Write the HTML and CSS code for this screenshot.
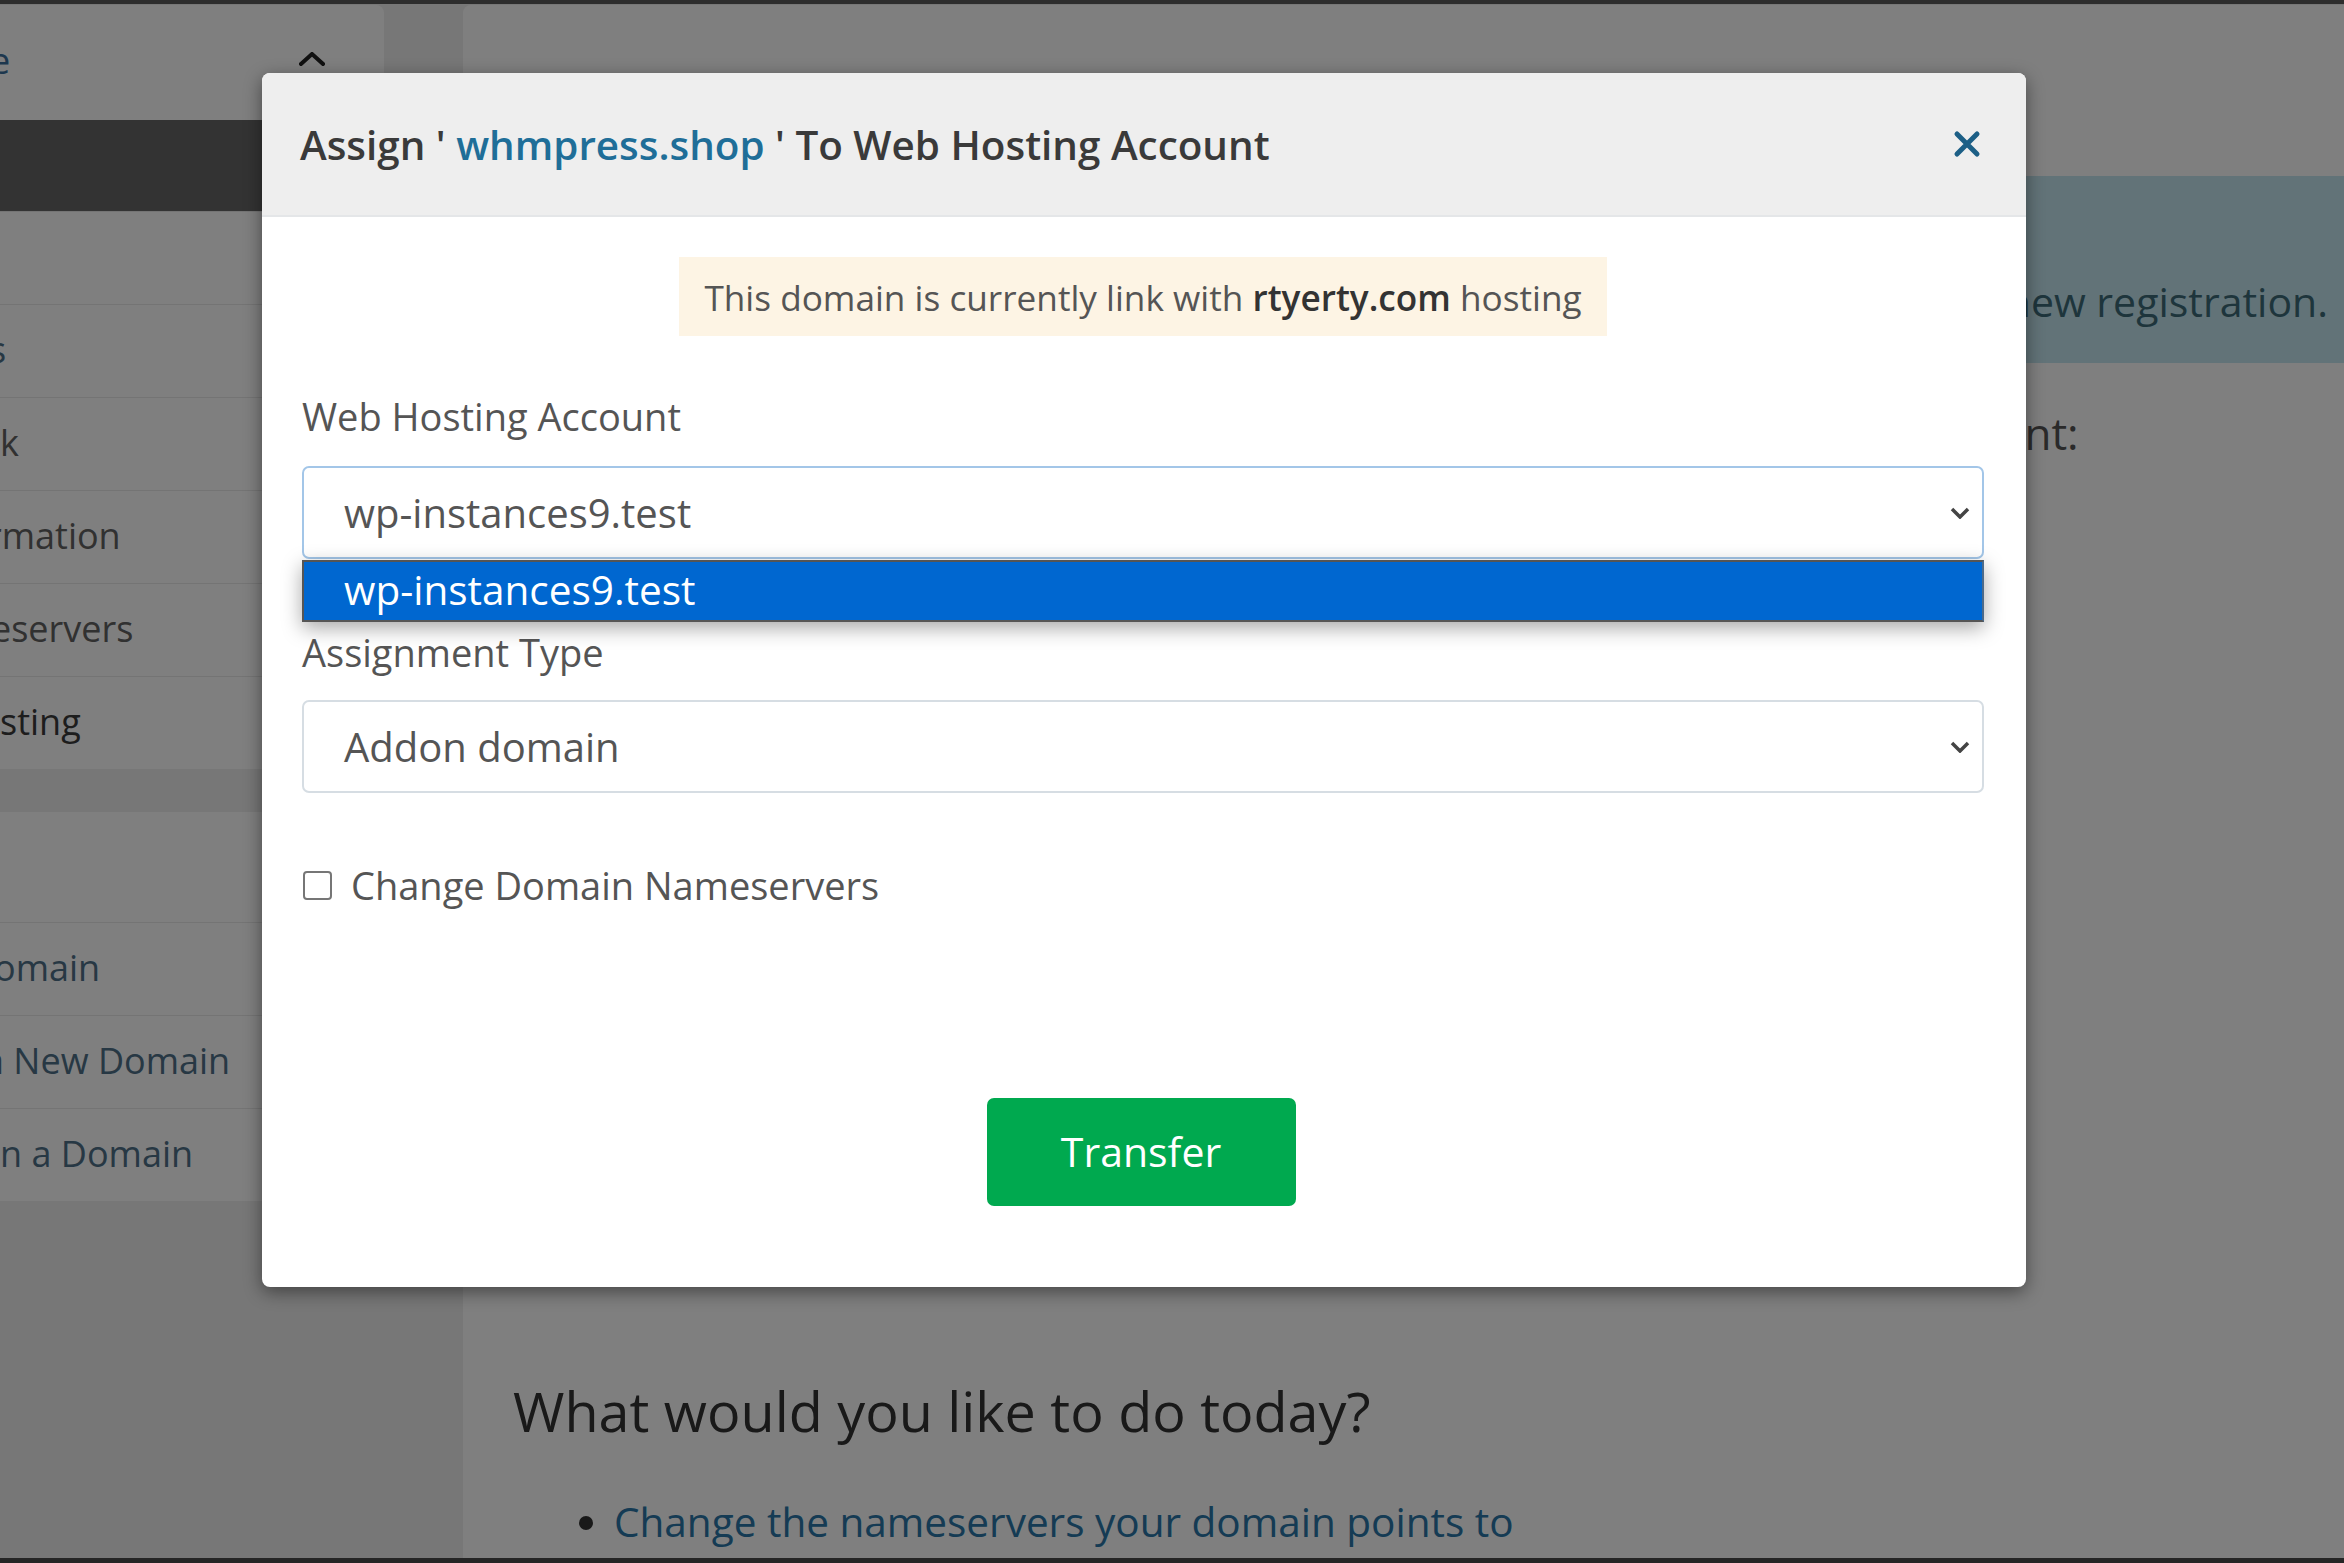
FILE: index.html
```html
<!DOCTYPE html>
<html lang="en">
<head>
<meta charset="utf-8">
<title>Assign to Web Hosting Account</title>
<link rel="stylesheet" href="styles.css">
</head>
<body>
<div class="topbar"></div>
<div class="page">
  <aside class="sidebar">
    <div class="panel">
      <div class="panel-head">
        <span class="panel-title cut">e</span>
        <svg class="chev-up" width="26" height="14" viewBox="0 0 26 14"><polyline points="2,12 13,2 24,12" fill="none" stroke="#222" stroke-width="4" stroke-linecap="square"/></svg>
      </div>
      <div class="item active"></div>
      <div class="item"></div>
      <div class="item linkish"><span class="cut-s">s</span></div>
      <div class="item">k</div>
      <div class="item"><span class="cut-m">rmation</span></div>
      <div class="item"><span class="cut-e">eservers</span></div>
      <div class="item strong">sting</div>
    </div>
    <div class="panel second">
      <div class="panel-head tall"></div>
      <div class="item linkish"><span class="cut-o">omain</span></div>
      <div class="item linkish"><span class="cut-a">a New Domain</span></div>
      <div class="item linkish">n a Domain</div>
    </div>
  </aside>
  <main class="content">
    <div class="alert-info">
      <div class="alert-tail">Awaiting new registration.</div>
    </div>
    <div class="info-grid">
      <div class="info-col"></div>
      <div class="info-col">
        <h4 class="info-label">First Payment Amount:</h4>
      </div>
    </div>
    <h2 class="today">What would you like to do today?</h2>
    <ul class="actions">
      <li><a href="#">Change the nameservers your domain points to</a></li>
    </ul>
  </main>
</div>
<div class="bottombar"></div>
<div class="backdrop"></div>

<div class="modal">
  <div class="modal-header">
    <h4 class="modal-title">Assign ' <span class="domain">whmpress.shop</span> ' To Web Hosting Account</h4>
    <svg class="close" width="30" height="30" viewBox="0 0 30 30"><path d="M5 5 L25 25 M25 5 L5 25" stroke="#1c5f86" stroke-width="5" stroke-linecap="round" fill="none"/></svg>
  </div>
  <div class="modal-body">
    <div class="notice">This domain is currently link with <b>rtyerty.com</b> hosting</div>

    <div class="form-group first">
      <label class="label">Web Hosting Account</label>
      <div class="select focus">
        <span>wp-instances9.test</span>
        <svg class="chev" width="20" height="12" viewBox="0 0 20 12"><polyline points="2,2 10,10 18,2" fill="none" stroke="#444" stroke-width="3.5"/></svg>
        <div class="popup">wp-instances9.test</div>
      </div>
    </div>

    <div class="form-group">
      <label class="label">Assignment Type</label>
      <div class="select">
        <span>Addon domain</span>
        <svg class="chev" width="20" height="12" viewBox="0 0 20 12"><polyline points="2,2 10,10 18,2" fill="none" stroke="#444" stroke-width="3.5"/></svg>
      </div>
    </div>

    <label class="check-row"><span class="checkbox"></span>Change Domain Nameservers</label>

    <button class="btn-transfer">Transfer</button>
  </div>
</div>
</body>
</html>
```

FILE: styles.css
```css
html, body {
  margin: 0;
  padding: 0;
}
body {
  width: 2344px;
  height: 1563px;
  overflow: hidden;
  background: #eeeeee;
  font-family: "Open Sans", "Noto Sans", sans-serif;
  display: flex;
  flex-direction: column;
  position: relative;
}
.topbar {
  height: 4px;
  background: #5a5a5a;
  flex: 0 0 4px;
}
.bottombar {
  height: 5px;
  flex: 0 0 5px;
  background: #4a4a4a;
}
.page {
  flex: 1;
  display: flex;
  gap: 79px;
  padding-top: 1px;
  overflow: hidden;
}

/* sidebar */
.sidebar {
  flex: 0 0 384px;
  display: flex;
  flex-direction: column;
  gap: 43px;
  overflow: hidden;
}
.panel {
  background: #fff;
  border-radius: 0 8px 8px 0;
  display: flex;
  flex-direction: column;
}
.panel-head {
  height: 115px;
  display: flex;
  align-items: center;
  justify-content: space-between;
  padding-right: 59px;
  font-size: 36px;
  color: #3a6f9c;
}
.panel-head.tall {
  height: 110px;
}
.panel-title.cut {
  margin-left: -10px;
  margin-top: -4px;
}
.chev-up {
  margin-top: -8px;
}
.item {
  height: 93px;
  box-sizing: border-box;
  border-top: 1px solid #e9e9e9;
  display: flex;
  align-items: center;
  padding-bottom: 3px;
  font-size: 36px;
  color: #626262;
  white-space: nowrap;
}
.item.active {
  height: 91px;
  background: #666666;
  border-top: none;
}
.item.linkish {
  color: #4f7088;
}
.item.strong {
  color: #3a3a3a;
}
.cut-s { margin-left: -11px; }
.cut-m { margin-left: -13px; }
.cut-e { margin-left: -9px; }
.cut-o { margin-left: -6px; }
.cut-a { margin-left: -16px; }

/* main content */
.content {
  flex: 0 0 1960px;
  background: #fff;
  border-radius: 8px 0 0 0;
  padding: 171px 0 0 50px;
  box-sizing: border-box;
  display: flex;
  flex-direction: column;
}
.alert-info {
  background: #c4e6f0;
  color: #3d6b78;
  font-size: 41px;
  line-height: 52px;
  padding: 99px 95px 36px 30px;
  white-space: nowrap;
}
.alert-tail {
  text-align: right;
}
.info-grid {
  margin-top: 44px;
  display: grid;
  grid-template-columns: 1097px 1fr;
  height: 900px;
}
.info-label {
  margin: 0;
  font-size: 44px;
  line-height: 53px;
  font-weight: 400;
  color: #555;
}
.today {
  margin: 73px 0 0;
  font-size: 55.7px;
  line-height: 60px;
  font-weight: 400;
  color: #333;
}
.actions {
  margin: 52px 0 0;
  padding-left: 101px;
  font-size: 40.5px;
  line-height: 60px;
  color: #333;
}
.actions a {
  color: #2a76a8;
  text-decoration: none;
}

/* backdrop */
.backdrop {
  position: absolute;
  inset: 0;
  background: rgba(0, 0, 0, 0.5);
}

/* modal */
.modal {
  position: absolute;
  left: 262px;
  top: 73px;
  width: 1764px;
  height: 1214px;
  background: #fff;
  border-radius: 8px;
  box-shadow: 0 5px 18px rgba(0, 0, 0, 0.45);
  display: flex;
  flex-direction: column;
}
.modal-header {
  height: 144px;
  box-sizing: border-box;
  flex: 0 0 144px;
  background: #eeeeee;
  border-bottom: 2px solid #e4e6e8;
  border-radius: 8px 8px 0 0;
  display: flex;
  align-items: center;
  justify-content: space-between;
  padding: 0 44px 0 38px;
}
.modal-title {
  margin: 0;
  font-size: 40.4px;
  font-weight: 600;
  color: #3a3a3a;
}
.modal-title .domain {
  color: #1f6e98;
}
.modal-body {
  flex: 1;
  display: flex;
  flex-direction: column;
  padding: 40px 42px 0 40px;
}
.notice {
  align-self: center;
  background: #fdf4e4;
  color: #555;
  font-size: 35.2px;
  line-height: 50px;
  padding: 15px 25px 14px;
}
.notice b {
  color: #333;
  font-weight: 600;
}
.form-group {
  display: flex;
  flex-direction: column;
  margin-top: 67px;
}
.form-group.first {
  margin-top: 54px;
}
.label {
  font-size: 38px;
  line-height: 53px;
  color: #555;
  margin-bottom: 23px;
}
.form-group:not(.first) .label {
  margin-bottom: 21px;
}
.select {
  position: relative;
  height: 93px;
  box-sizing: border-box;
  border: 2px solid #d6dde3;
  border-radius: 7px;
  display: flex;
  align-items: center;
  justify-content: space-between;
  padding: 0 12px 0 40px;
  font-size: 40px;
  color: #555;
}
.select.focus {
  border-color: #a3c6e8;
}
.popup {
  position: absolute;
  left: -2px;
  right: -2px;
  top: calc(100% + 3px);
  height: 62px;
  box-sizing: border-box;
  background: #0067d0;
  border: 2px solid #555;
  border-right-color: #4b6a8a;
  color: #fff;
  font-size: 40.5px;
  line-height: 56px;
  padding-left: 40px;
  box-shadow: 0 6px 20px rgba(0, 0, 0, 0.35);
  z-index: 2;
}
.check-row {
  margin-top: 66px;
  display: flex;
  align-items: center;
  gap: 19px;
  font-size: 38px;
  line-height: 53px;
  color: #555;
}
.checkbox {
  width: 25px;
  height: 25px;
  border: 2px solid #767676;
  border-radius: 4px;
  background: #fff;
  margin-left: 1px;
}
.btn-transfer {
  align-self: center;
  margin-top: 186px;
  width: 309px;
  height: 108px;
  border: none;
  border-radius: 7px;
  background: #00a94f;
  color: #fff;
  font-family: "Open Sans", "Noto Sans", sans-serif;
  font-size: 41px;
  font-weight: 500;
  margin-left: -4px;
  padding-bottom: 4px;
}
```
